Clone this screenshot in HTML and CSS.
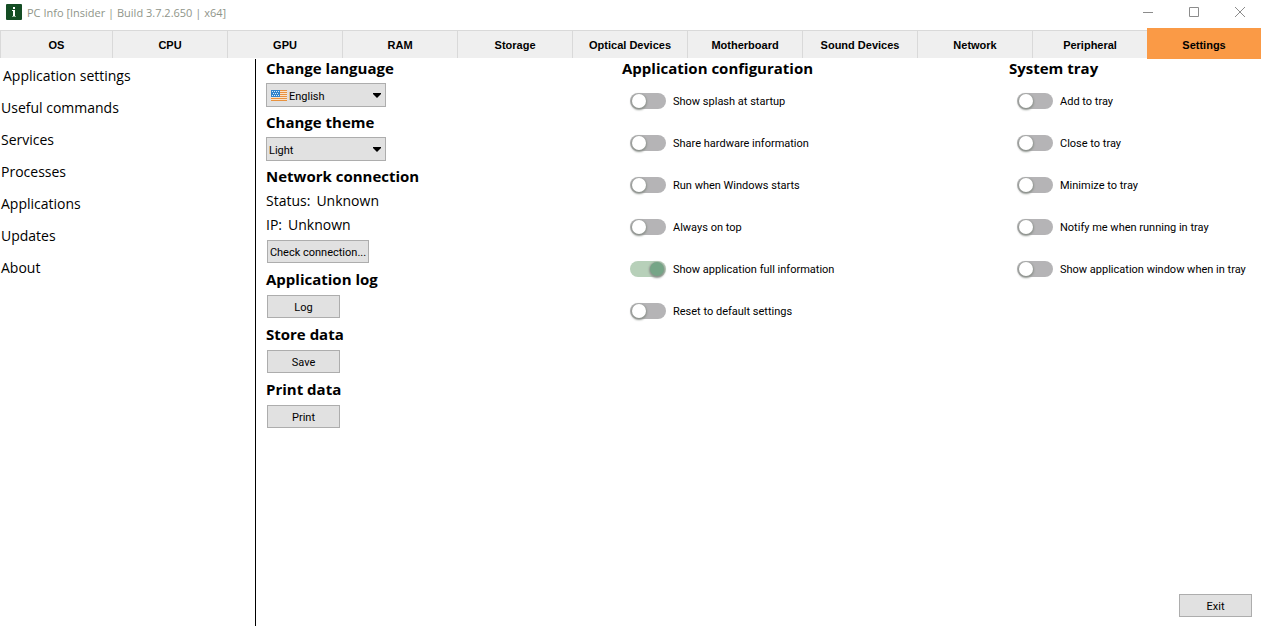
FILE: index.html
```
<!DOCTYPE html>
<html lang="en">
<head>
    <meta charset="UTF-8">
    <meta name="viewport" content="width=device-width, initial-scale=1.0">
    <title>PC Info</title>
    <link rel="stylesheet" href="styles.css">
</head>
<body>
    <div class="window">
        <header class="title-bar">
            <svg class="app-icon" width="16" height="16" viewBox="0 0 16 16">
                <rect width="16" height="16" rx="1" fill="#144d24"/>
                <rect x="7" y="3" width="2" height="2" fill="#fff"/>
                <path d="M6 6h3v6h-2v-5h-1z" fill="#fff"/>
                <path d="M6 12h4v1h-4z" fill="#8fae97"/>
            </svg>
            <span class="title">PC Info [Insider | Build 3.7.2.650 | x64]</span>
            <div class="window-buttons">
                <button class="window-btn" aria-label="Minimize">
                    <svg width="12" height="12" viewBox="0 0 12 12"><path d="M1 6.5h10"/></svg>
                </button>
                <button class="window-btn" aria-label="Maximize">
                    <svg width="12" height="12" viewBox="0 0 12 12"><path d="M1.500 1.500h9v9h-9z"/></svg>
                </button>
                <button class="window-btn" aria-label="Close">
                    <svg width="12" height="12" viewBox="0 0 12 12"><path d="M1 1l10 10M11 1l-10 10"/></svg>
                </button>
            </div>
        </header>

        <nav class="tabs">
            <button class="tab first">OS</button>
            <button class="tab">CPU</button>
            <button class="tab">GPU</button>
            <button class="tab">RAM</button>
            <button class="tab">Storage</button>
            <button class="tab">Optical Devices</button>
            <button class="tab">Motherboard</button>
            <button class="tab">Sound Devices</button>
            <button class="tab">Network</button>
            <button class="tab">Peripheral</button>
            <button class="tab active">Settings</button>
        </nav>

        <div class="main">
            <nav class="sidebar">
                <a href="#settings" class="current">Application settings</a>
                <a href="#commands">Useful commands</a>
                <a href="#services">Services</a>
                <a href="#processes">Processes</a>
                <a href="#applications">Applications</a>
                <a href="#updates">Updates</a>
                <a href="#about">About</a>
            </nav>

            <main class="content">
                <div class="columns">
                    <!-- General -->
                    <div class="general">
                        <section class="group">
                            <h2><label for="language">Change language</label></h2>
                            <div class="dropdown">
                                <select id="language" class="with-flag">
                                    <option>English</option>
                                </select>
                                <svg class="flag" width="16" height="11" viewBox="0 0 16 11">
                                    <rect width="16" height="11" fill="#fbe3c8"/>
                                    <path d="M0 .5h16M0 2.500h16M0 4.500h16M0 6.500h16M0 8.500h16M0 10.500h16" stroke="#e8923f"/>
                                    <rect width="9" height="7" fill="#2f83cc"/>
                                    <path d="M1 1.500h7M2 3.500h6M1 5.500h7" stroke="#d8ecfa" stroke-dasharray="1 1"/>
                                </svg>
                                <svg class="arrow" width="8" height="5" viewBox="0 0 8 5"><path d="M0 0h8v1l-4 4l-4-4z"/></svg>
                            </div>
                        </section>
                        <section class="group">
                            <h2><label for="theme">Change theme</label></h2>
                            <div class="dropdown">
                                <select id="theme">
                                    <option>Light</option>
                                </select>
                                <svg class="arrow" width="8" height="5" viewBox="0 0 8 5"><path d="M0 0h8v1l-4 4l-4-4z"/></svg>
                            </div>
                        </section>
                        <section class="group">
                            <h2>Network connection</h2>
                            <div class="status">
                                <p><span>Status:</span><span>Unknown</span></p>
                                <p><span>IP:</span><span>Unknown</span></p>
                            </div>
                            <button class="btn btn-wide">Check connection...</button>
                        </section>
                        <section class="group">
                            <h2>Application log</h2>
                            <button class="btn">Log</button>
                        </section>
                        <section class="group">
                            <h2>Store data</h2>
                            <button class="btn">Save</button>
                        </section>
                        <section class="group">
                            <h2>Print data</h2>
                            <button class="btn">Print</button>
                        </section>
                    </div>

                    <!-- Application configuration -->
                    <section class="options">
                        <h2>Application configuration</h2>
                        <label class="option"><input type="checkbox" class="switch">Show splash at startup</label>
                        <label class="option"><input type="checkbox" class="switch">Share hardware information</label>
                        <label class="option"><input type="checkbox" class="switch">Run when Windows starts</label>
                        <label class="option"><input type="checkbox" class="switch">Always on top</label>
                        <label class="option"><input type="checkbox" class="switch" checked>Show application full information</label>
                        <label class="option"><input type="checkbox" class="switch">Reset to default settings</label>
                    </section>

                    <!-- System tray -->
                    <section class="options">
                        <h2>System tray</h2>
                        <label class="option"><input type="checkbox" class="switch">Add to tray</label>
                        <label class="option"><input type="checkbox" class="switch">Close to tray</label>
                        <label class="option"><input type="checkbox" class="switch">Minimize to tray</label>
                        <label class="option"><input type="checkbox" class="switch">Notify me when running in tray</label>
                        <label class="option"><input type="checkbox" class="switch">Show application window when in tray</label>
                    </section>
                </div>

                <footer class="footer">
                    <button class="btn">Exit</button>
                </footer>
            </main>
        </div>
    </div>
</body>
</html>
```
FILE: styles.css
```
/* General Styles */
* {
    box-sizing: border-box;
}

body {
    margin: 0;
    background: #fff;
    color: #000;
    font-family: "Open Sans", sans-serif;
    font-size: 11px;
}

button, select, input {
    margin: 0;
    color: inherit;
    font: inherit;
}

.window {
    display: flex;
    flex-direction: column;
    min-height: 100vh;
}

/* Title bar */
.title-bar {
    display: flex;
    align-items: center;
    height: 24px;
    padding-left: 6px;
}

.title {
    margin-left: 5px;
    color: #8f958a;
    font-size: 11px;
}

.window-buttons {
    display: flex;
    gap: 4px;
    margin-left: auto;
}

.window-btn {
    display: flex;
    align-items: center;
    justify-content: center;
    width: 42px;
    height: 24px;
    padding: 0;
    border: none;
    background: none;
}

.window-btn svg {
    fill: none;
    stroke: #8c8c8c;
}

/* Tabs */
.tabs {
    display: flex;
    align-items: center;
    height: 31px;
    margin-top: 4px;
}

.tab {
    flex: 115 1 0;
    height: 28px;
    padding: 2px 0 0;
    border: 1px solid #d9d9d9;
    border-width: 1px 0 0 1px;
    background: #efefef;
    font-family: "Liberation Sans", Arial, sans-serif;
    font-weight: bold;
}

.tab.first {
    flex-grow: 112;
}

.tab.active {
    height: 31px;
    border: none;
    background: #fa9a46;
}

/* Layout */
.main {
    display: flex;
    flex: 1;
}

.sidebar {
    display: flex;
    flex-direction: column;
    width: 256px;
    padding-top: 1px;
    border-right: 1px solid #000;
}

.sidebar a {
    padding-left: 1px;
    color: #000;
    font-size: 14px;
    line-height: 32px;
    text-decoration: none;
}

.sidebar a.current {
    padding-left: 3px;
}

.content {
    display: flex;
    flex: 1;
    flex-direction: column;
    padding: 0 9px 8px 10px;
}

.columns {
    display: grid;
    grid-template-columns: 356fr 387fr 243fr;
}

h2 {
    margin: 0;
    font-size: 15px;
    line-height: 18px;
}

/* General settings */
.general {
    display: flex;
    flex-direction: column;
    gap: 6px;
}

.group h2 {
    margin-bottom: 6px;
}

.status {
    margin: -2px 0;
}

.status p {
    display: flex;
    gap: 6px;
    margin: 0;
    font-size: 14px;
    line-height: 24px;
}

.dropdown {
    position: relative;
    width: 120px;
}

.dropdown select {
    display: block;
    width: 100%;
    height: 24px;
    padding: 2px 20px 0 2px;
    border: 1px solid #adadad;
    border-radius: 0;
    background: #e1e1e1;
    font-family: Roboto, sans-serif;
    appearance: none;
}

.dropdown .with-flag {
    padding-left: 22px;
}

.flag {
    position: absolute;
    top: 7px;
    left: 5px;
}

.arrow {
    position: absolute;
    top: 10px;
    right: 5px;
}

.btn {
    display: block;
    width: 73px;
    height: 23px;
    margin: 7px 0 1px 1px;
    padding: 1px 0 0;
    border: 1px solid #adadad;
    background: #e1e1e1;
    font-family: Roboto, sans-serif;
}

.btn-wide {
    width: 102px;
    margin-top: 5px;
}

/* Switches */
.option {
    display: flex;
    align-items: center;
    gap: 7px;
    height: 42px;
    padding-left: 8px;
    font-family: Roboto, sans-serif;
    white-space: nowrap;
}

.options h2 {
    margin-bottom: 3px;
}

.switch {
    display: flex;
    width: 36px;
    height: 16px;
    border-radius: 8px;
    background: #b5b4b6;
    appearance: none;
}

.switch::before {
    content: "";
    width: 14px;
    height: 14px;
    margin: 1px 2px;
    border-radius: 50%;
    background: #fff;
    box-shadow: 0 1px 2px 1px #8e938e;
}

.switch:checked {
    justify-content: flex-end;
    background: #b7d0b9;
}

.switch:checked::before {
    background: #76a587;
}

.footer {
    display: flex;
    justify-content: flex-end;
    margin-top: auto;
}
```
